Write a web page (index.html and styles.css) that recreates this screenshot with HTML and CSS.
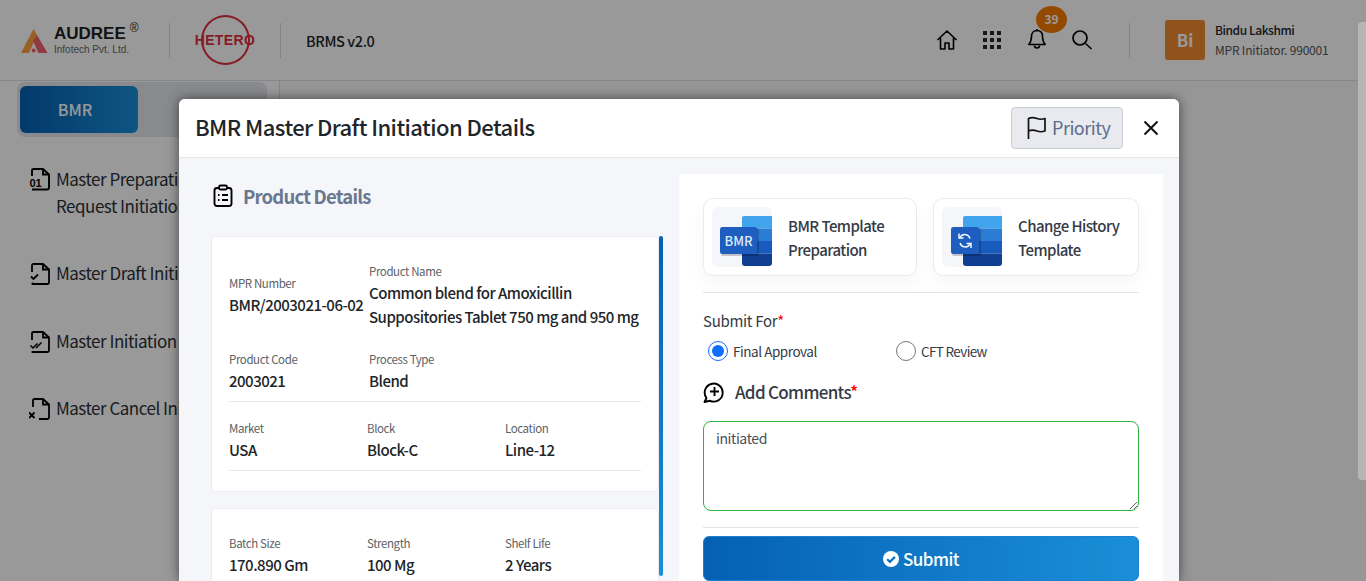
FILE: index.html
```html
<!DOCTYPE html>
<html lang="en">
<head>
    <meta charset="UTF-8">
    <meta name="viewport" content="width=device-width, initial-scale=1.0">
    <title>BRMS v2.0</title>
    <link rel="stylesheet" href="styles.css">
</head>
<body>

    <header class="topbar">
        <div class="brand">
            <svg class="audree-mark" width="27" height="24" viewBox="0 0 27 24">
                <polygon points="12.500,0 16,6 8,24 0,24" fill="#ffa040"/>
                <polygon points="16,6 26.500,24 17.500,24 12,12" fill="#f0606a"/>
                <circle cx="12.700" cy="21.500" r="2" fill="#f0606a"/>
            </svg>
            <div class="audree-text">
                <div class="audree-name">AUDREE<sup>®</sup></div>
                <div class="audree-sub">Infotech Pvt. Ltd.</div>
            </div>
        </div>
        <div class="vline"></div>
        <div class="hetero">
            <span class="hetero-ring"></span>
            <span class="hetero-name">HETERO</span>
        </div>
        <div class="vline"></div>
        <div class="app-name">BRMS v2.0</div>

        <nav class="top-icons">
            <svg width="22" height="22" viewBox="0 0 22 22" fill="none" stroke="#000" stroke-width="1.600" stroke-linejoin="round">
                <path d="M1.500 11 11 2l9.500 9M4.500 9v11h4.500v-6h4v6h4.500V9"/>
            </svg>
            <svg class="grid-icon" width="18" height="18" viewBox="0 0 18 18" fill="#2a2a2a">
                <rect x="0" y="0" width="4" height="4"/><rect x="7" y="0" width="4" height="4"/><rect x="14" y="0" width="4" height="4"/>
                <rect x="0" y="7" width="4" height="4"/><rect x="7" y="7" width="4" height="4"/><rect x="14" y="7" width="4" height="4"/>
                <rect x="0" y="14" width="4" height="4"/><rect x="7" y="14" width="4" height="4"/><rect x="14" y="14" width="4" height="4"/>
            </svg>
            <div class="bell">
                <svg width="20" height="22" viewBox="0 0 20 22" fill="none" stroke="#000" stroke-width="1.600" stroke-linejoin="round">
                    <path d="M10 2.500c-3.500 0-5.500 2.500-5.500 6 0 4-1 6-2.700 8h16.400c-1.700-2-2.700-4-2.700-8 0-3.500-2-6-5.500-6z"/>
                    <path d="M10 1v1.500M7.500 17.500a2.500 2.500 0 0 0 5 0"/>
                </svg>
                <span class="badge">39</span>
            </div>
            <svg width="22" height="22" viewBox="0 0 22 22" fill="none" stroke="#000" stroke-width="1.700">
                <circle cx="9" cy="9" r="7"/>
                <path d="m14.500 14.500 6 5.500" stroke-width="1.500"/>
            </svg>
        </nav>
        <div class="vline user-line"></div>
        <div class="user">
            <div class="avatar">Bi</div>
            <div>
                <div class="user-name">Bindu Lakshmi</div>
                <div class="user-role">MPR Initiator. 990001</div>
            </div>
        </div>
    </header>

    <aside class="sidebar">
        <div class="tabs">
            <div class="tab-active">BMR</div>
        </div>
        <ul class="side-menu">
            <li class="tall">
                <svg width="22" height="24" viewBox="0 0 22 24" fill="none" stroke="#000" stroke-width="1.900">
                    <path d="M3 9V3.500Q3 2 4.500 2H14l6 5.500V20.500Q20 22.500 18 22.500H3"/><path d="M14 2v5.500h6"/>
                    <text x="0.500" y="20" class="file-num">01</text>
                </svg>
                <span>Master Preparation<br>Request Initiation</span>
            </li>
            <li>
                <svg width="22" height="24" viewBox="0 0 22 24" fill="none" stroke="#000" stroke-width="1.800">
                    <path d="M3 10V3.500Q3 2 4.500 2H14l6 5.500V20.500Q20 22 18.500 22H3.500v-1.500"/><path d="M14 2v5.500h6"/>
                    <path d="m2 14.500 2.500 2.500 4.500-4.500"/>
                </svg>
                <span>Master Draft Initiation</span>
            </li>
            <li>
                <svg width="22" height="24" viewBox="0 0 22 24" fill="none" stroke="#000" stroke-width="1.800">
                    <path d="M3 10V3.500Q3 2 4.500 2H14l6 5.500V20.500Q20 22 18.500 22H3.500v-1"/><path d="M14 2v5.500h6"/>
                    <path d="m1.500 15.500 2.500 2.500 4.500-4.500M7 18l5.500-5.500" stroke-width="1.500"/>
                </svg>
                <span>Master Initiation List</span>
            </li>
            <li>
                <svg width="22" height="24" viewBox="0 0 22 24" fill="none" stroke="#000" stroke-width="1.800">
                    <path d="M4 10V3.500Q4 2 5.500 2H14l6 5.500V20.500Q20 22 18.500 22H10"/><path d="M14 2v5.500h6"/>
                    <path d="m0 15.500 5.500 5.500M5.500 15.500 0 21"/>
                </svg>
                <span>Master Cancel Initiation</span>
            </li>
        </ul>
    </aside>

    <div class="backdrop"></div>
    <div class="page-scroll"></div>

    <section class="modal">
        <div class="modal-head">
            <h2>BMR Master Draft Initiation Details</h2>
            <button class="priority">
                <svg width="20" height="24" viewBox="0 0 20 24" fill="none" stroke="#111" stroke-width="1.700" stroke-linejoin="round">
                    <path d="M1.500 23V2.500c3-1.500 6-1 8.500 0s5 1 8 0V15c-3 1-5.500 1-8 0s-5.500-1.500-8.500 0"/>
                </svg>
                Priority
            </button>
            <svg class="close-x" width="16" height="16" viewBox="0 0 16 16" stroke="#111" stroke-width="2"><path d="m1.500 1.500 13 13M14.500 1.500l-13 13"/></svg>
        </div>

        <div class="modal-body">
            <div class="left-col">
                <div class="section-title">
                    <svg width="20" height="24" viewBox="0 0 20 24" fill="none" stroke="#000" stroke-width="1.900" stroke-linejoin="round">
                        <rect x="1.500" y="4" width="17" height="18" rx="2.500"/>
                        <rect x="6" y="1.500" width="8" height="4" rx="1.500" fill="#f5f6f9"/>
                        <path d="M5 11h1.500M9 11h6M5 16h1.500M9 16h6"/>
                    </svg>
                    Product Details
                </div>
                <div class="scroller">
                    <div class="card first-card">
                        <div class="row two top-row">
                            <div class="field mid"><label>MPR Number</label><b>BMR/2003021-06-02</b></div>
                            <div class="field"><label>Product Name</label><b>Common blend for Amoxicillin<br>Suppositories Tablet 750 mg and 950 mg</b></div>
                        </div>
                        <div class="row two code-row">
                            <div class="field"><label>Product Code</label><b>2003021</b></div>
                            <div class="field"><label>Process Type</label><b>Blend</b></div>
                        </div>
                        <div class="row three">
                            <div class="field"><label>Market</label><b>USA</b></div>
                            <div class="field"><label>Block</label><b>Block-C</b></div>
                            <div class="field"><label>Location</label><b>Line-12</b></div>
                        </div>
                    </div>
                    <div class="card second-card">
                        <div class="row three plain">
                            <div class="field"><label>Batch Size</label><b>170.890 Gm</b></div>
                            <div class="field"><label>Strength</label><b>100 Mg</b></div>
                            <div class="field"><label>Shelf Life</label><b>2 Years</b></div>
                        </div>
                    </div>
                    <div class="inner-scroll"></div>
                </div>
            </div>

            <div class="right-col">
                <div class="templates">
                    <div class="tpl tpl-a">
                        <div class="tpl-icon">
                            <svg width="52" height="50" viewBox="0 0 52 50">
                                <path d="M22 2a2 2 0 0 1 2-2h28v12.500H22z" fill="#41a5ee"/>
                                <rect x="22" y="12.500" width="30" height="12.500" fill="#2b7cd3"/>
                                <rect x="22" y="25" width="30" height="12.500" fill="#185abd"/>
                                <path d="M22 37.500h30V47a3 3 0 0 1-3 3H25a3 3 0 0 1-3-3z" fill="#103f91"/>
                                <rect x="1" y="12" width="38" height="28" rx="2" fill="#000" opacity=".2"/>
                                <rect x="0" y="11" width="37" height="27" rx="2.500" fill="#1d5ec0"/>
                                <text x="18.500" y="29.500" text-anchor="middle" class="tpl-word">BMR</text>
                            </svg>
                        </div>
                        <span>BMR Template<br>Preparation</span>
                    </div>
                    <div class="tpl tpl-b">
                        <div class="tpl-icon">
                            <svg width="51" height="50" viewBox="0 0 51 50">
                                <path d="M12 2a2 2 0 0 1 2-2h37v12.500H12z" fill="#41a5ee"/>
                                <rect x="12" y="12.500" width="39" height="12.500" fill="#2b7cd3"/>
                                <rect x="12" y="25" width="39" height="12.500" fill="#185abd"/>
                                <path d="M12 37.500h39V47a3 3 0 0 1-3 3H15a3 3 0 0 1-3-3z" fill="#103f91"/>
                                <rect x="1" y="12" width="29" height="28" rx="2" fill="#000" opacity=".2"/>
                                <rect x="0" y="11" width="28" height="27" rx="2.500" fill="#1d5ec0"/>
                                <path d="M19 22.500a5.500 5.500 0 0 0-9.500-2l-1 1M9 27a5.500 5.500 0 0 0 9.500 2l1-1" fill="none" stroke="#fff" stroke-width="1.400"/>
                                <path d="M8 17.500v4.500h4.500M20 32v-4.500h-4.500" fill="none" stroke="#fff" stroke-width="1.400"/>
                            </svg>
                        </div>
                        <span>Change History<br>Template</span>
                    </div>
                </div>
                <div class="hr templates-hr"></div>

                <div class="submit-for">Submit For<em>*</em></div>
                <div class="radios">
                    <label class="radio radio-a"><input type="radio" name="sf" checked> Final Approval</label>
                    <label class="radio radio-b"><input type="radio" name="sf"> CFT Review</label>
                </div>

                <div class="comments-title">
                    <svg width="22" height="22" viewBox="0 0 22 22" fill="none" stroke="#000" stroke-width="1.900">
                        <path d="M3.500 17A9 9 0 1 1 7 19.800L1.500 21z" stroke-linejoin="round"/>
                        <path d="M11.500 6v9M7 10.500h9"/>
                    </svg>
                    <span>Add Comments<em>*</em></span>
                </div>
                <textarea class="comment-box">initiated</textarea>
                <div class="hr submit-hr"></div>
                <button class="submit-btn">
                    <svg width="16" height="16" viewBox="0 0 16 16">
                        <circle cx="8" cy="8" r="8" fill="#fff"/>
                        <path d="m4.200 8.200 2.700 2.700 5-5" fill="none" stroke="#0f72c4" stroke-width="2.200"/>
                    </svg>
                    Submit
                </button>
            </div>
        </div>
    </section>

</body>
</html>
```

FILE: styles.css
```css
* { box-sizing: border-box; }

html, body {
    margin: 0;
    height: 581px;
    overflow: hidden;
}

body {
    background: #fbfbfb;
    font-family: "Noto Sans CJK SC", "Source Sans Pro", "Noto Sans", sans-serif;
    color: #212529;
}

/* header */
.topbar {
    display: flex;
    align-items: center;
    height: 81px;
    padding-left: 21px;
    background: #fff;
    border-bottom: 1px solid #dde1e6;
}

.brand {
    display: flex;
    align-items: center;
    gap: 6px;
    width: 118px;
}

.audree-mark { margin-top: 2px; }

.audree-name {
    font-family: "Liberation Sans", sans-serif;
    font-size: 17px;
    line-height: 16px;
    font-weight: 700;
    color: #1f1f1f;
    white-space: nowrap;
}

.audree-name sup {
    margin-left: 4px;
    font-size: 12px;
    font-weight: 400;
    line-height: 0;
    vertical-align: 7px;
}

.audree-sub {
    margin-top: 2px;
    font-family: "Liberation Sans", sans-serif;
    font-size: 10px;
    line-height: 11px;
    color: #666;
    white-space: nowrap;
}

.vline {
    width: 1px;
    height: 35px;
    background: #d8dbe0;
}

.brand + .vline { margin-left: 30px; }

.hetero {
    position: relative;
    display: flex;
    align-items: center;
    justify-content: center;
    width: 60px;
    height: 50px;
    margin: 0 25px;
}

.hetero-ring {
    position: absolute;
    left: 6px;
    top: 0;
    width: 49px;
    height: 50px;
    border: 2px solid #e0303e;
    border-radius: 50%;
}

.hetero-name {
    position: relative;
    font-family: "Liberation Sans", sans-serif;
    font-size: 14px;
    font-weight: 700;
    letter-spacing: .4px;
    color: #e0303e;
}

.app-name {
    margin-left: 25px;
    font-size: 14.500px;
    font-weight: 500;
    letter-spacing: -.4px;
}

.top-icons {
    display: flex;
    align-items: center;
    gap: 24px;
    margin-left: auto;
}

.grid-icon { margin: 0 1px 0 1px; }

.bell {
    position: relative;
    display: flex;
    left: 1px;
    top: -1px;
}

.badge {
    position: absolute;
    left: 9px;
    top: -22px;
    width: 31px;
    height: 27px;
    border-radius: 50%;
    background: #f57a00;
    color: #fff;
    font-size: 12px;
    font-weight: 700;
    line-height: 26px;
    letter-spacing: -.2px;
    text-align: center;
}

.top-icons > svg:last-child { margin-left: 1px; }

.user-line { margin-left: 36px; }

.user {
    display: flex;
    align-items: center;
    gap: 10px;
    width: 201px;
    margin-left: 35px;
}

.avatar {
    width: 40px;
    height: 40px;
    border-radius: 3px;
    background: #f08a30;
    color: #fff;
    font-size: 17px;
    font-weight: 700;
    line-height: 40px;
    text-align: center;
}

.user-name {
    font-size: 12px;
    font-weight: 500;
    line-height: 20px;
    letter-spacing: -.45px;
}

.user-role {
    font-size: 12px;
    line-height: 20px;
    letter-spacing: -.2px;
    color: #555;
}

/* sidebar */
.sidebar {
    width: 280px;
    height: 500px;
    padding: 1px 12px 0 17px;
    background: #fff;
    border-right: 1px solid #dde1e6;
}

.tabs {
    height: 55px;
    padding: 4px 3px;
    border-radius: 8px;
    background: #e4e6ec;
}

.tab-active {
    width: 118px;
    height: 47px;
    padding-right: 8px;
    border-radius: 6px;
    background: linear-gradient(90deg, #0560b3, #1a8fd8);
    color: #fff;
    font-size: 16px;
    font-weight: 500;
    line-height: 47px;
    text-align: center;
}

.side-menu {
    list-style: none;
    margin: 28px 0 0;
    padding: 0 0 0 12px;
    font-size: 17px;
    line-height: 27px;
    letter-spacing: -.5px;
    color: #2c3038;
}

.side-menu li {
    display: flex;
    gap: 5px;
    margin-bottom: 41px;
    white-space: nowrap;
}

.side-menu li:nth-child(3) { margin-bottom: 40px; }

.side-menu svg { margin-top: 3px; flex: none; }

.side-menu li.tall svg { margin-top: 2px; }

.side-menu li.tall { margin-bottom: 40px; }

.file-num {
    font-family: "Liberation Sans", sans-serif;
    font-size: 11px;
    font-weight: 700;
    letter-spacing: 0;
    fill: #000;
    stroke: none;
}

/* overlay */
.backdrop {
    position: absolute;
    inset: 0;
    background: rgba(0, 0, 0, .4);
}

.page-scroll {
    position: absolute;
    right: 0;
    top: 22px;
    width: 8px;
    height: 458px;
    border-radius: 4px 0 0 4px;
    background: #b6b6b6;
}

/* modal */
.modal {
    position: absolute;
    left: 179px;
    top: 99px;
    width: 1000px;
    height: 482px;
    border-radius: 6px 6px 0 0;
    background: #f5f6f9;
    box-shadow: 0 0 12px rgba(0, 0, 0, .55);
    overflow: hidden;
}

.modal-head {
    display: flex;
    align-items: center;
    height: 59px;
    padding: 0 20px 0 16px;
    background: #fff;
    border-bottom: 1px solid #e6e8ec;
}

.modal-head h2 {
    margin: 0 0 4px;
    font-size: 22px;
    font-weight: 500;
    letter-spacing: -.56px;
    color: #212529;
}

.priority {
    display: flex;
    align-items: center;
    gap: 5px;
    width: 112px;
    height: 42px;
    margin-left: auto;
    padding: 0 0 3px 15px;
    border: 1px solid #c8ccd4;
    border-radius: 4px;
    background: #e8eaef;
    color: #5d6e8c;
    font-family: inherit;
    font-size: 18px;
    letter-spacing: -.5px;
}

.priority svg { margin-top: 3px; }

.close-x { margin-left: 20px; }

.modal-body {
    display: flex;
    gap: 0;
}

.left-col {
    width: 500px;
    padding: 25px 15px 0 32px;
}

.section-title {
    display: flex;
    align-items: center;
    gap: 10px;
    padding-left: 2px;
    height: 26px;
    font-size: 18.500px;
    font-weight: 700;
    letter-spacing: -.8px;
    color: #69778f;
}

.scroller {
    position: relative;
    margin-top: 27px;
}

.card {
    width: 448px;
    padding: 0 17px;
    border: 1px solid #e9ebf0;
    border-radius: 4px;
    background: #fff;
}

.first-card { height: 256px; padding-top: 25px; }

.second-card { margin-top: 16px; height: 160px; padding-top: 25px; }

.inner-scroll {
    position: absolute;
    left: 448px;
    top: 0;
    width: 4px;
    height: 340px;
    border-radius: 2px;
    background: linear-gradient(180deg, #0560b3, #1a8fd8);
}

.row {
    display: grid;
    align-items: center;
}

.row.two { grid-template-columns: 140px 1fr; }

.row.three {
    grid-template-columns: 138px 138px 1fr;
    height: 69px;
    padding-top: 17px;
    align-items: start;
    border-bottom: 1px solid #e6e8ec;
}

.row.plain { border-bottom: 0; height: auto; padding-top: 0; }

.code-row {
    height: 73px;
    padding-top: 21px;
    align-items: start;
    border-bottom: 1px solid #e6e8ec;
}

.field label {
    display: block;
    font-size: 11.500px;
    line-height: 19px;
    letter-spacing: -.4px;
    color: #5b5f66;
}

.field.mid { margin-top: -1px; }

.field b {
    display: block;
    font-size: 15px;
    font-weight: 500;
    line-height: 24px;
    letter-spacing: -.5px;
    color: #212529;
    white-space: nowrap;
}

/* right panel */
.right-col {
    width: 484px;
    height: 440px;
    margin-top: 16px;
    padding: 24px 24px 0;
    background: #fff;
}

.templates {
    display: flex;
    gap: 16px;
}

.tpl {
    display: flex;
    align-items: center;
    gap: 16px;
    height: 78px;
    padding-left: 8px;
    border: 1px solid #e9ebf0;
    border-radius: 10px;
    background: #fff;
    box-shadow: 0 8px 16px rgba(40, 50, 80, .04);
    font-size: 15px;
    font-weight: 500;
    line-height: 24px;
    letter-spacing: -.55px;
    color: #343a46;
}

.tpl span { margin-top: 2px; }

.tpl-a { width: 214px; }

.tpl-b { width: 206px; }

.tpl-icon {
    display: flex;
    align-items: flex-end;
    justify-content: flex-end;
    width: 60px;
    height: 60px;
    padding-bottom: 1px;
    border-radius: 6px;
    background: #f5f6f9;
}

.tpl-word {
    font-family: "Noto Sans CJK SC", sans-serif;
    font-size: 13px;
    font-weight: 500;
    letter-spacing: 0;
    fill: #dfe9f7;
}

.hr {
    height: 1px;
    background: #e3e5ea;
}

.templates-hr { margin-top: 16px; }

.submit-for {
    margin-top: 18px;
    font-size: 15px;
    line-height: 20px;
    letter-spacing: -.3px;
    color: #343a46;
}

em {
    font-style: normal;
    color: #f00;
}

.radios {
    display: flex;
    align-items: center;
    margin-top: 10px;
    padding-left: 5px;
}

.radio {
    display: flex;
    align-items: center;
    gap: 5px;
    font-size: 13.500px;
    letter-spacing: -.45px;
    color: #343a46;
}

.radio-a { width: 188px; }

.radio-b { letter-spacing: -.65px; }

.radio input {
    width: 20px;
    height: 20px;
    margin: 0;
    accent-color: #0d6efd;
}

.comments-title {
    display: flex;
    align-items: center;
    gap: 10px;
    margin-top: 19px;
    font-size: 17px;
    font-weight: 500;
    line-height: 24px;
    letter-spacing: -.7px;
    color: #343a46;
}

.comment-box {
    display: block;
    width: 436px;
    height: 90px;
    margin-top: 17px;
    padding: 6px 12px;
    border: 1px solid #2fb344;
    border-radius: 8px;
    background: #fff;
    color: #495057;
    font-family: inherit;
    font-size: 14px;
    line-height: 20px;
    letter-spacing: -.4px;
}

.submit-hr { margin-top: 16px; }

.submit-btn {
    display: flex;
    align-items: center;
    justify-content: center;
    gap: 4px;
    width: 436px;
    height: 45px;
    margin-top: 8px;
    border: 1px solid #1a80cf;
    border-radius: 6px;
    background: linear-gradient(90deg, #0560b3, #1a8fd8);
    color: #fff;
    font-family: inherit;
    font-size: 17px;
    font-weight: 500;
    letter-spacing: -.5px;
}
```
